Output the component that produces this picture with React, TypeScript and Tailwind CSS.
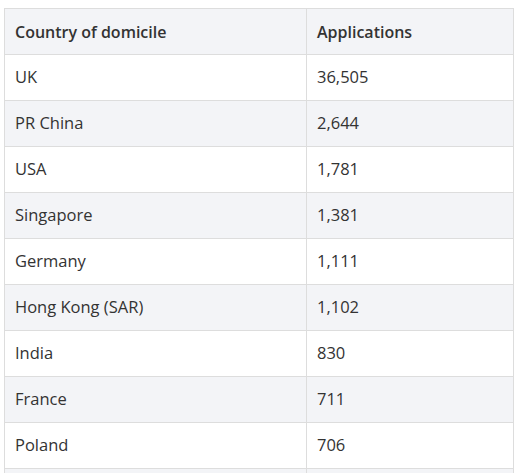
import React from "react";

const rows: [string, string][] = [
  ["UK", "36,505"],
  ["PR China", "2,644"],
  ["USA", "1,781"],
  ["Singapore", "1,381"],
  ["Germany", "1,111"],
  ["Hong Kong (SAR)", "1,102"],
  ["India", "830"],
  ["France", "711"],
  ["Poland", "706"],
  ["", ""],
];

export default function App() {
  return (
    <div
      className="bg-white w-[521px] h-[473px] overflow-hidden pl-[4px] pt-[8px]"
      style={{ fontFamily: '"Open Sans", "Noto Sans", sans-serif' }}
    >
      <table className="border-collapse w-[510px] text-[16.5px] text-[#333]">
        <thead>
          <tr className="bg-[#f3f4f7]">
            <th className="h-[46px] w-[302px] border border-[#dddddd] px-[10px] text-left font-semibold text-[16px]">
              Country of domicile
            </th>
            <th className="h-[46px] border border-[#dddddd] px-[10px] text-left font-semibold text-[16px]">
              Applications
            </th>
          </tr>
        </thead>
        <tbody>
          {rows.map(([c, n], i) => (
            <tr key={i} className={i % 2 === 0 ? "bg-white" : "bg-[#f3f4f7]"}>
              <td className="h-[46px] border border-[#dddddd] px-[10px]">{c}</td>
              <td className="h-[46px] border border-[#dddddd] px-[10px]">{n}</td>
            </tr>
          ))}
        </tbody>
      </table>
    </div>
  );
}
